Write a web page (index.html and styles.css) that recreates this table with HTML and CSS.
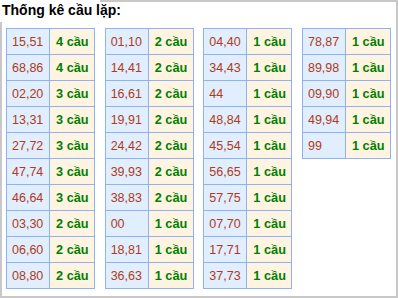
FILE: index.html
```html
<!DOCTYPE html>
<html lang="vi">
<head>
<meta charset="utf-8">
<title>Thống kê cầu lặp</title>
<link rel="stylesheet" href="styles.css">
</head>
<body>
<div class="box">
  <div class="title">Thống kê cầu lặp:</div>
  <div class="tables">
    <table class="cau">
      <tr><td class="num">15,51</td><td class="cnt">4 cầu</td></tr>
      <tr><td class="num">68,86</td><td class="cnt">4 cầu</td></tr>
      <tr><td class="num">02,20</td><td class="cnt">3 cầu</td></tr>
      <tr><td class="num">13,31</td><td class="cnt">3 cầu</td></tr>
      <tr><td class="num">27,72</td><td class="cnt">3 cầu</td></tr>
      <tr><td class="num">47,74</td><td class="cnt">3 cầu</td></tr>
      <tr><td class="num">46,64</td><td class="cnt">3 cầu</td></tr>
      <tr><td class="num">03,30</td><td class="cnt">2 cầu</td></tr>
      <tr><td class="num">06,60</td><td class="cnt">2 cầu</td></tr>
      <tr><td class="num">08,80</td><td class="cnt">2 cầu</td></tr>
    </table>
    <table class="cau">
      <tr><td class="num">01,10</td><td class="cnt">2 cầu</td></tr>
      <tr><td class="num">14,41</td><td class="cnt">2 cầu</td></tr>
      <tr><td class="num">16,61</td><td class="cnt">2 cầu</td></tr>
      <tr><td class="num">19,91</td><td class="cnt">2 cầu</td></tr>
      <tr><td class="num">24,42</td><td class="cnt">2 cầu</td></tr>
      <tr><td class="num">39,93</td><td class="cnt">2 cầu</td></tr>
      <tr><td class="num">38,83</td><td class="cnt">2 cầu</td></tr>
      <tr><td class="num">00</td><td class="cnt">1 cầu</td></tr>
      <tr><td class="num">18,81</td><td class="cnt">1 cầu</td></tr>
      <tr><td class="num">36,63</td><td class="cnt">1 cầu</td></tr>
    </table>
    <table class="cau">
      <tr><td class="num">04,40</td><td class="cnt">1 cầu</td></tr>
      <tr><td class="num">34,43</td><td class="cnt">1 cầu</td></tr>
      <tr><td class="num">44</td><td class="cnt">1 cầu</td></tr>
      <tr><td class="num">48,84</td><td class="cnt">1 cầu</td></tr>
      <tr><td class="num">45,54</td><td class="cnt">1 cầu</td></tr>
      <tr><td class="num">56,65</td><td class="cnt">1 cầu</td></tr>
      <tr><td class="num">57,75</td><td class="cnt">1 cầu</td></tr>
      <tr><td class="num">07,70</td><td class="cnt">1 cầu</td></tr>
      <tr><td class="num">17,71</td><td class="cnt">1 cầu</td></tr>
      <tr><td class="num">37,73</td><td class="cnt">1 cầu</td></tr>
    </table>
    <table class="cau">
      <tr><td class="num">78,87</td><td class="cnt">1 cầu</td></tr>
      <tr><td class="num">89,98</td><td class="cnt">1 cầu</td></tr>
      <tr><td class="num">09,90</td><td class="cnt">1 cầu</td></tr>
      <tr><td class="num">49,94</td><td class="cnt">1 cầu</td></tr>
      <tr><td class="num">99</td><td class="cnt">1 cầu</td></tr>
    </table>
  </div>
</div>
</body>
</html>
```
FILE: styles.css
```css
html, body {
  margin: 0;
  padding: 0;
  background: #fff;
}
body {
  font-family: "Liberation Sans", Arial, sans-serif;
}
.box {
  position: relative;
  box-sizing: border-box;
  width: 398px;
  height: 298px;
  border: 2px solid #c8c8c8;
  padding: 26px 0 0 4px;
}
.title {
  position: absolute;
  top: -2px;
  left: -2px;
  width: 100px;
  height: 22px;
  padding: 2px 0 0 2px;
  box-sizing: border-box;
  background: #fff;
  font-size: 14px;
  font-weight: bold;
  color: #000;
  white-space: nowrap;
  line-height: 16px;
}
.tables {
  display: flex;
  align-items: flex-start;
  gap: 9.67px;
}
.cau {
  border-collapse: collapse;
  width: 89px;
  table-layout: fixed;
  border: 1px solid #8fb3f2;
}
.cau tr {
  height: 26px;
}
.cau td {
  box-sizing: border-box;
  border: 1px solid #8fb3f2;
  padding: 0 0 0 5px;
  white-space: nowrap;
  vertical-align: middle;
}
.cau td.num {
  width: 43px;
  background: #e1eefd;
  color: #b03a1c;
  font-size: 12.5px;
}
.cau td.cnt {
  background: #fff4e1;
  color: #007f00;
  font-weight: bold;
  font-size: 12.75px;
  padding-left: 6px;
}
```
